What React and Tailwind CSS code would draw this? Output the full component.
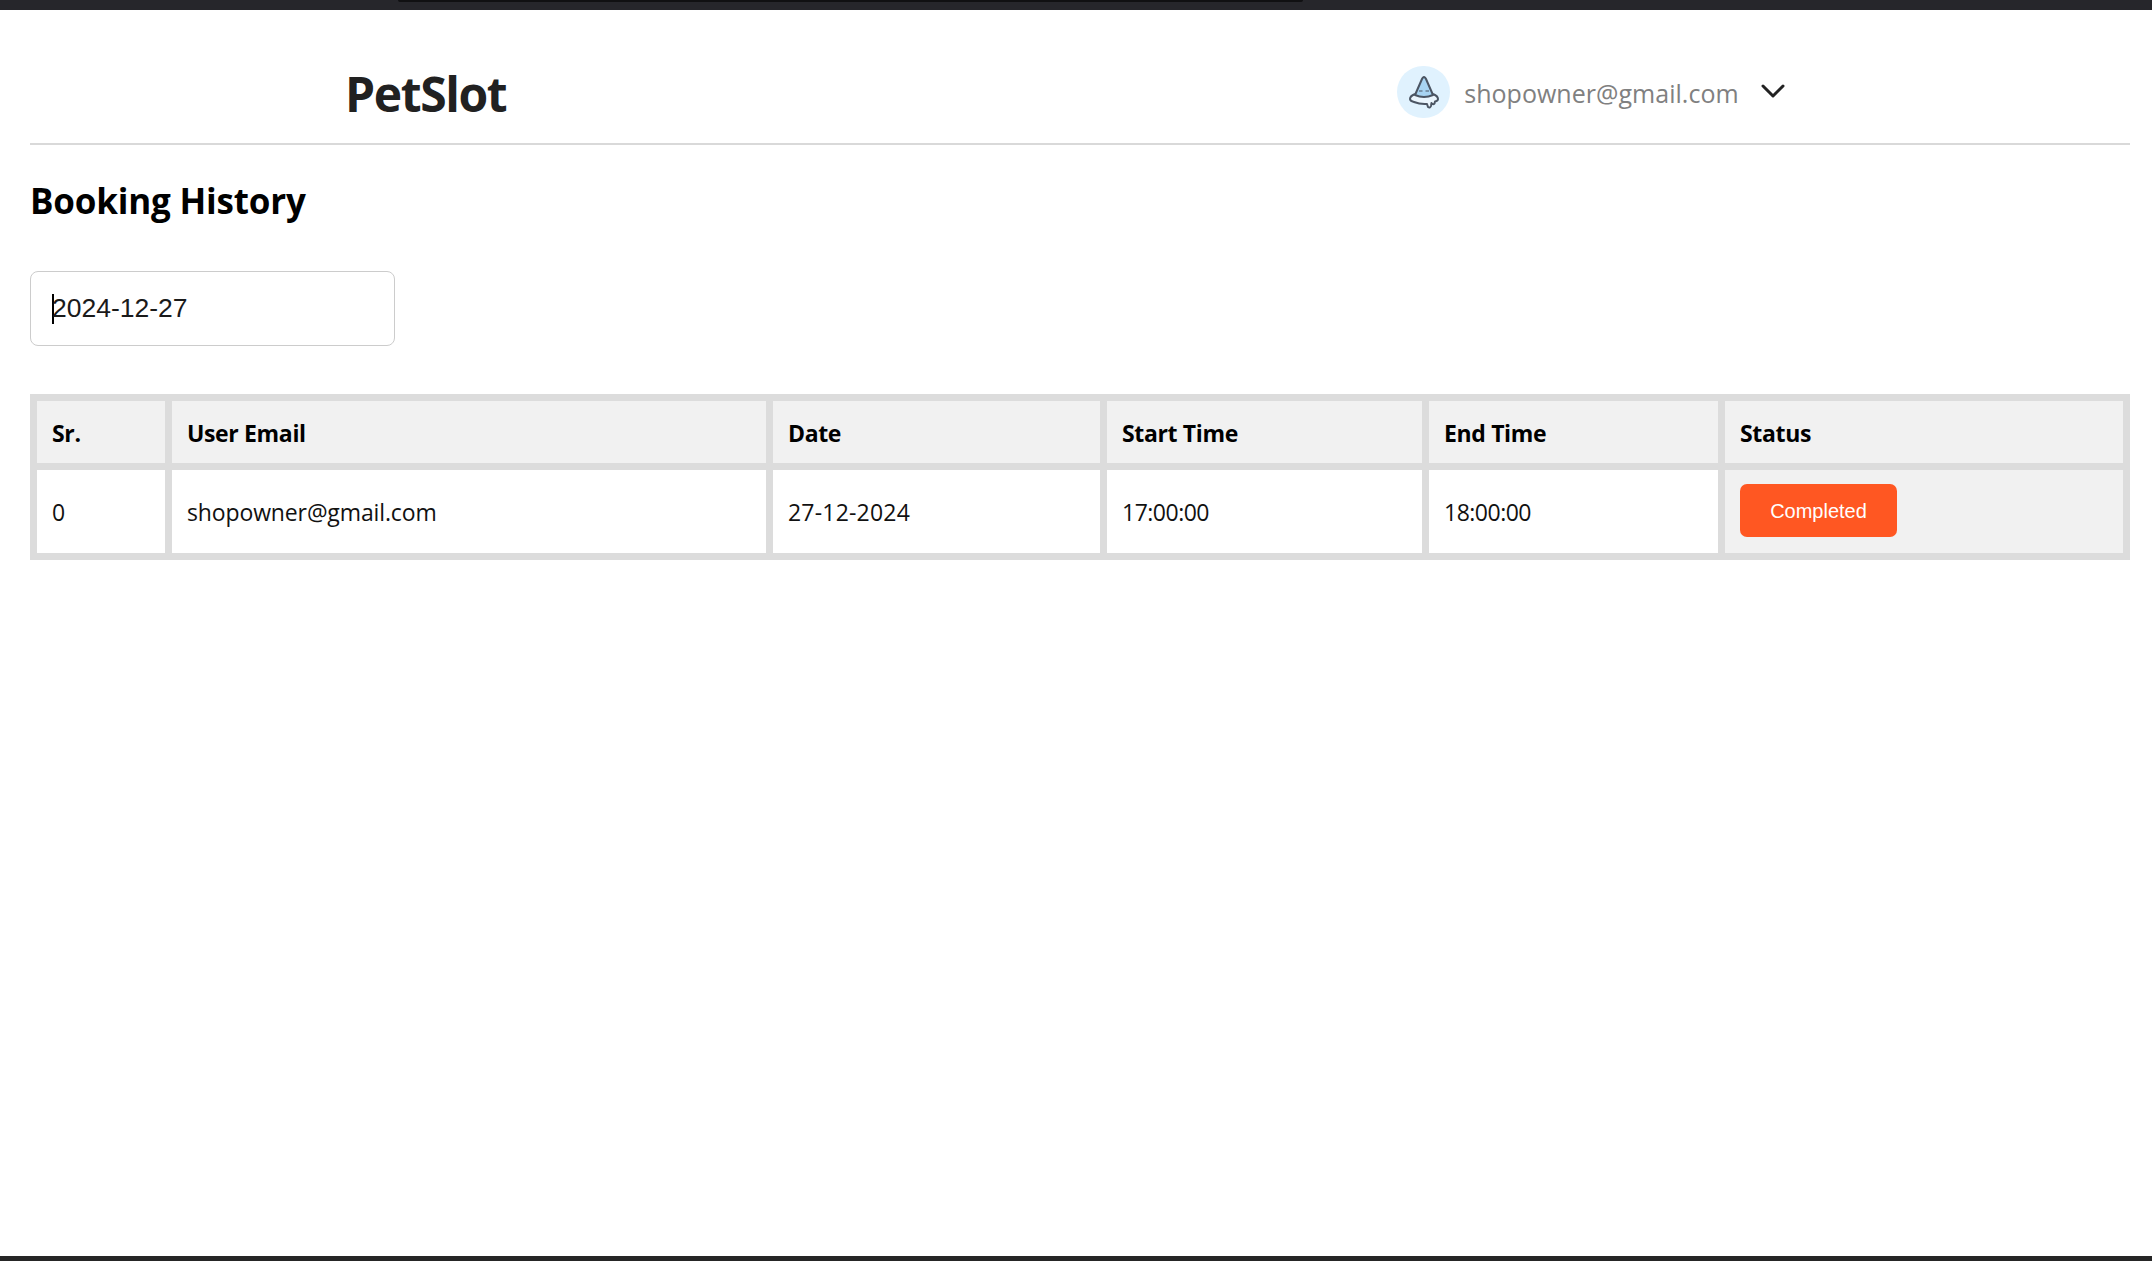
import React from "react";
import { ChevronDown } from "lucide-react";

const headers = ["Sr.", "User Email", "Date", "Start Time", "End Time", "Status"];
const widths = ["w-[128px]", "w-[594px]", "w-[327px]", "w-[315px]", "w-[289px]", "w-[398px]"];
const row = [
  { text: "0", cls: "tracking-[-0.2px]" },
  { text: "shopowner@gmail.com", cls: "tracking-[-0.13px]" },
  { text: "27-12-2024", cls: "tracking-[0.2px]" },
  { text: "17:00:00", cls: "tracking-[-0.5px]" },
  { text: "18:00:00", cls: "tracking-[-0.5px]" },
];

const Avatar = () => (
  <div className="w-[53px] h-[52px] rounded-full bg-[#e0f2fe] flex items-center justify-center">
    <svg width="32" height="34" viewBox="0 0 32 34" fill="none">
      <path
        d="M7 19 Q2 21 2 24 Q2 26 6 27 Q12 29.5 19 29 L20 32 Q22 33.5 23 31 L23.5 28 Q25 30 26.5 28.5 L27 26.5 Q30 26 30 24 Q30 21 25 19"
        fill="#eaf5fd"
        stroke="#4b5563"
        strokeWidth="2"
        strokeLinejoin="round"
      />
      <path d="M16 2 Q14.5 2.5 14 4 L7 20 Q16 24 25 20 L18 4 Q17.5 2.5 16 2Z" fill="#a8d4f2" stroke="#4b5563" strokeWidth="2" strokeLinejoin="round" />
      <path d="M11 16 H14.5 M17.5 16 H21" stroke="#4b5563" strokeWidth="1.2" />
    </svg>
  </div>
);

const App = () => {
  return (
    <div className="min-h-screen flex flex-col bg-white font-['Open_Sans',sans-serif]">
      <div className="h-[10px] bg-[#26262b] pl-[398px]">
        <div className="w-[905px] h-[2px] bg-[#101012] rounded-b-sm"></div>
      </div>

      <main className="flex-1 pl-[30px] pr-[22px]">
        <header className="h-[135px] border-b-2 border-[#d9d9d9] flex items-start pt-[56px]">
          <h1 className="ml-[315px] text-[48px] leading-[60px] -mt-[2px] font-bold tracking-[-1.4px] text-[#212121]">PetSlot</h1>
          <div className="ml-[891px] flex items-center">
            <Avatar />
            <span className="ml-[14px] mt-[3px] text-[25px] tracking-[0.03px] text-[#808080]">shopowner@gmail.com</span>
            <ChevronDown className="ml-[14px] mb-[2px] text-[#222222]" size={40} strokeWidth={1.8} />
          </div>
        </header>

        <h2 className="mt-[32px] text-[35px] leading-[48px] font-bold tracking-[-0.2px] text-black">Booking History</h2>

        <div className="mt-[46px] w-[365px] h-[75px] border border-[#cccccc] rounded-lg px-[21px] flex items-center font-['Liberation_Sans',sans-serif] text-[26.5px] text-[#1a1a1a]">
          <span className="w-[2px] h-[30px] bg-black"></span>
          <span className="-ml-[2px]">2024-12-27</span>
        </div>

        <table className="mt-[48px] w-[2100px] table-fixed border-separate border-spacing-[7px] bg-[#dcdcdc]">
          <thead>
            <tr>
              {headers.map((h, i) => (
                <th key={h} className={`${widths[i]} h-[62px] bg-[#f1f1f1] px-[15px] pt-[2px] text-left text-[23px] font-bold tracking-[-0.35px] text-black`}>
                  {h}
                </th>
              ))}
            </tr>
          </thead>
          <tbody>
            <tr>
              {row.map((c) => (
                <td key={c.text} className={`h-[83px] bg-white px-[15px] pt-[2px] text-[23px] text-[#111111] ${c.cls}`}>
                  {c.text}
                </td>
              ))}
              <td className="h-[83px] bg-[#f1f1f1] px-[15px]">
                <button className="w-[157px] h-[53px] -mt-[2px] block rounded-[7px] bg-[#ff5722] text-white text-[20px] font-['Liberation_Sans',sans-serif]">
                  Completed
                </button>
              </td>
            </tr>
          </tbody>
        </table>
      </main>

      <div className="h-[5px] bg-[#262626]"></div>
    </div>
  );
};

export default App;
